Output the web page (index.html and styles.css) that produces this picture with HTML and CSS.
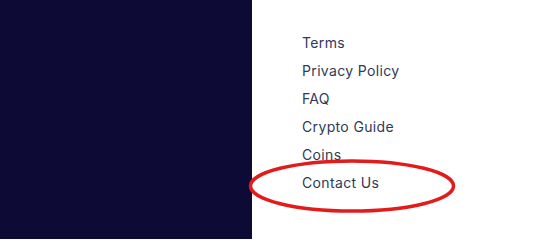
FILE: index.html
```html
<!DOCTYPE html>
<html>
<head>
<meta charset="utf-8">
<link rel="stylesheet" href="styles.css">
</head>
<body>
<div class="page">
  <div class="side"></div>
  <div class="content">
    <ul class="links">
      <li><a href="#">Terms</a></li>
      <li><a href="#">Privacy Policy</a></li>
      <li><a href="#">FAQ</a></li>
      <li><a href="#">Crypto Guide</a></li>
      <li><a href="#">Coins</a></li>
      <li class="marked"><a href="#">Contact Us</a>
        <svg class="ring" width="210" height="58" viewBox="0 0 210 58"><ellipse cx="104" cy="30" rx="101.5" ry="25" fill="none" stroke="#e21b1b" stroke-width="3.5"/></svg>
      </li>
    </ul>
  </div>
</div>
</body>
</html>
```

FILE: styles.css
```css
html, body {
  margin: 0;
  padding: 0;
  background: #ffffff;
}
.page {
  display: flex;
  width: 550px;
  height: 239px;
  overflow: hidden;
}
.side {
  width: 252px;
  flex: none;
  background: #0e0a36;
}
.content {
  flex: 1;
  padding: 29px 0 0 50px;
}
.links {
  list-style: none;
  margin: 0;
  padding: 0;
}
.links li {
  position: relative;
  height: 28px;
  line-height: 28px;
  font-family: "Inter", "Noto Sans", sans-serif;
  font-size: 14px;
  letter-spacing: 0.35px;
}
.links a {
  color: #2e3a59;
  text-decoration: none;
}
.ring {
  position: absolute;
  left: -54px;
  top: -13px;
}
```
